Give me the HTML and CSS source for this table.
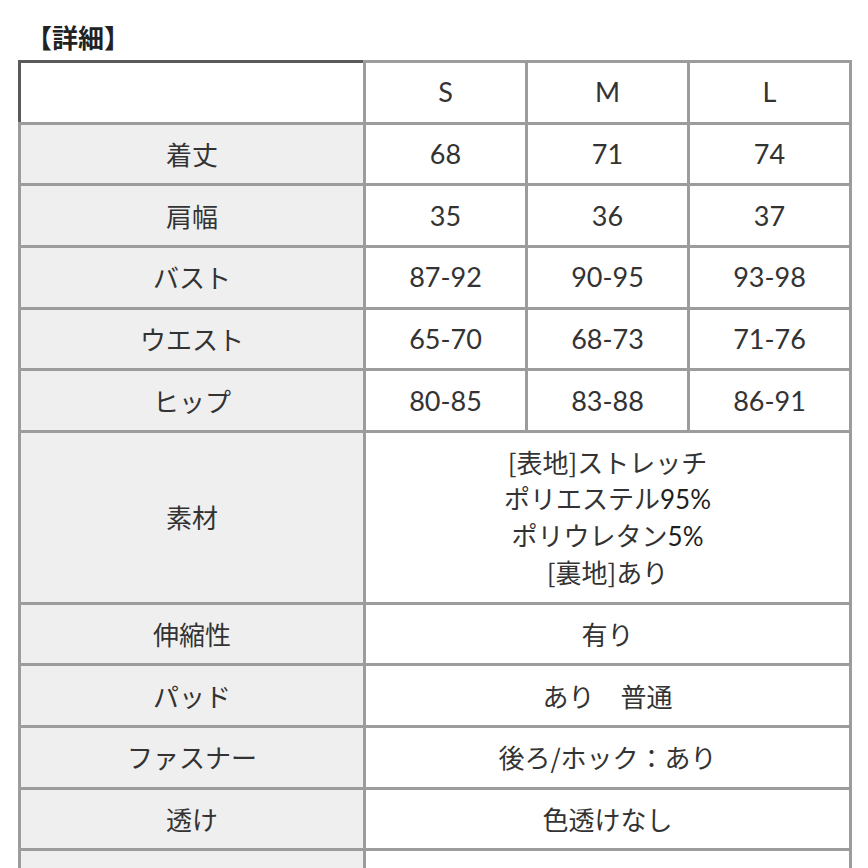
FILE: index.html
```html
<!DOCTYPE html>
<html lang="ja">
<head>
<meta charset="utf-8">
<link rel="stylesheet" href="styles.css">
</head>
<body>
<div class="page">
  <h1 class="title">【詳細】</h1>
  <table class="spec">
    <colgroup>
      <col class="c-label">
      <col class="c-size">
      <col class="c-size">
      <col class="c-size">
    </colgroup>
    <tr class="head">
      <td class="corner"></td>
      <td class="num">S</td>
      <td class="num">M</td>
      <td class="num">L</td>
    </tr>
    <tr><th>着丈</th><td class="num">68</td><td class="num">71</td><td class="num">74</td></tr>
    <tr><th>肩幅</th><td class="num">35</td><td class="num">36</td><td class="num">37</td></tr>
    <tr><th>バスト</th><td class="num">87-92</td><td class="num">90-95</td><td class="num">93-98</td></tr>
    <tr><th>ウエスト</th><td class="num">65-70</td><td class="num">68-73</td><td class="num">71-76</td></tr>
    <tr><th>ヒップ</th><td class="num">80-85</td><td class="num">83-88</td><td class="num">86-91</td></tr>
    <tr class="tall">
      <th>素材</th>
      <td colspan="3" class="multi">[表地]ストレッチ<br>ポリエステル<span class="n">95%</span><br>ポリウレタン<span class="n">5%</span><br>[裏地]あり</td>
    </tr>
    <tr><th>伸縮性</th><td colspan="3">有り</td></tr>
    <tr><th>パッド</th><td colspan="3">あり　普通</td></tr>
    <tr><th>ファスナー</th><td colspan="3">後ろ/ホック：あり</td></tr>
    <tr><th>透け</th><td colspan="3">色透けなし</td></tr>
    <tr><th>生地の厚さ</th><td colspan="3">普通</td></tr>
  </table>
</div>
</body>
</html>
```
FILE: styles.css
```css
html, body {
  margin: 0;
  padding: 0;
  background: #ffffff;
}
body {
  font-family: "Noto Sans CJK JP", "Noto Sans", sans-serif;
  color: #333333;
  overflow: hidden;
  height: 868px;
}
.page {
  padding: 18px 0 0 18px;
}
.title {
  margin: 0 0 4px 8px;
  font-size: 26px;
  line-height: 38px;
  font-weight: 700;
  color: #222222;
}
.spec {
  border-collapse: collapse;
  width: 832px;
  table-layout: fixed;
}
.c-label { width: 345px; }
.c-size { width: 162px; }
.spec th,
.spec td {
  border: 3px solid #9c9c9c;
  height: 58.7px;
  padding: 0;
  text-align: center;
  vertical-align: middle;
  font-size: 26px;
  font-weight: 400;
  line-height: 36px;
}
.spec th {
  background: #efefef;
  color: #333333;
}
.spec td {
  background: #ffffff;
  color: #333333;
}
.spec .corner {
  border-top-color: #5a5a5a;
  border-left-color: #5a5a5a;
}
.num, .n {
  font-family: "Lato", "Noto Sans", sans-serif;
  color: #1f1f1f;
}
.spec td.num {
  font-size: 27px;
}
.n { font-size: 26px; }
.tall th, .tall td { height: 168.5px; }
.multi {
  line-height: 36.5px;
}
```
